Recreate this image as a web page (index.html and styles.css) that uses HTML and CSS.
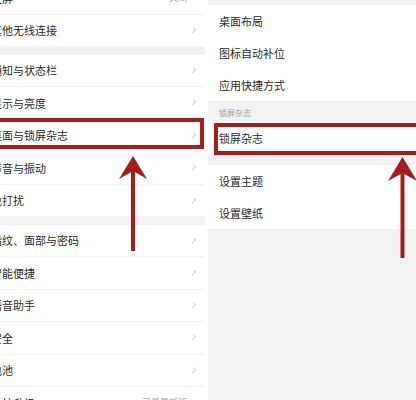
FILE: index.html
```html
<!DOCTYPE html>
<html lang="zh-CN">
<head>
    <meta charset="UTF-8">
    <meta name="viewport" content="width=device-width, initial-scale=1.0">
    <title>设置</title>
    <link rel="stylesheet" href="styles.css">
</head>
<body>
    <div class="screen">
        <div class="panel panel-left">
            <div class="row"><span class="label">投屏</span><span class="value">关闭</span><i class="chev"></i></div>
            <div class="row"><span class="label">其他无线连接</span><i class="chev"></i></div>
            <div class="gap"></div>
            <div class="row"><span class="label">通知与状态栏</span><i class="chev"></i></div>
            <div class="row"><span class="label">显示与亮度</span><i class="chev"></i></div>
            <div class="row marked"><span class="label">桌面与锁屏杂志</span><i class="chev"></i></div>
            <div class="row"><span class="label">声音与振动</span><i class="chev"></i></div>
            <div class="row"><span class="label">免打扰</span><i class="chev"></i></div>
            <div class="gap"></div>
            <div class="row"><span class="label">指纹、面部与密码</span><i class="chev"></i></div>
            <div class="row"><span class="label">智能便捷</span><i class="chev"></i></div>
            <div class="row"><span class="label">语音助手</span><i class="chev"></i></div>
            <div class="row"><span class="label">安全</span><i class="chev"></i></div>
            <div class="row"><span class="label">电池</span><i class="chev"></i></div>
            <div class="row"><span class="label">系统升级</span><span class="value">已是最新版</span><i class="chev"></i></div>
        </div>

        <div class="panel panel-right">
            <div class="strip"></div>
            <div class="row"><span class="label">桌面布局</span></div>
            <div class="row"><span class="label">图标自动补位</span></div>
            <div class="row"><span class="label">应用快捷方式</span></div>
            <div class="section-title">锁屏杂志</div>
            <div class="row tall marked"><span class="label">锁屏杂志</span></div>
            <div class="spacer"></div>
            <div class="row"><span class="label">设置主题</span></div>
            <div class="row"><span class="label">设置壁纸</span></div>
        </div>

        <!-- annotation arrows -->
        <svg class="arrows" width="416" height="400" viewBox="0 0 416 400">
            <rect x="131" y="166" width="4" height="85" fill="#a51c1c"/>
            <path d="M133 156 L147 179 L133 171 L119 179 Z" fill="#a51c1c"/>
            <rect x="400.5" y="167" width="4" height="91" fill="#a51c1c"/>
            <path d="M402.5 157 L417 181 L402.5 173 L388 181 Z" fill="#a51c1c"/>
        </svg>
    </div>
</body>
</html>
```

FILE: styles.css
```css
* {
    margin: 0;
    padding: 0;
    box-sizing: border-box;
    font-family: "Noto Sans CJK SC", "Noto Sans", sans-serif;
}

body {
    background: #fff;
    width: 416px;
    height: 400px;
    overflow: hidden;
}

.screen {
    position: relative;
    width: 416px;
    height: 400px;
    overflow: hidden;
    display: flex;
    align-items: flex-start;
    background: #fff;
}

.panel {
    flex-shrink: 0;
}

.panel-left {
    width: 225px;
    margin-left: -20px;
    margin-top: -18px;
    background: #fff;
}

.panel-right {
    width: 208px;
    height: 400px;
    margin-left: 3px;
    background: #f2f2f3;
}

.row {
    position: relative;
    height: 32.5px;
    display: flex;
    align-items: center;
    padding: 0 8px 0 11px;
    background: #fff;
    border-bottom: 1px solid #f4f4f4;
    color: #2b2b2b;
    font-size: 11px;
}

.panel-right .row {
    height: 32px;
    border-bottom: none;
}

.panel-right .row.tall {
    height: 34px;
}

.label {
    flex: 1;
    white-space: nowrap;
}

.value {
    color: #a8a8a8;
    font-size: 9px;
    margin-right: 4px;
}

.chev {
    width: 4px;
    height: 7px;
    border-right: 1px solid #c4c4c4;
    border-top: 1px solid #c4c4c4;
    transform: rotate(45deg) scale(0.75);
    margin-right: 2px;
}

.gap {
    height: 7.5px;
    background: #f2f2f3;
}

.strip {
    height: 5px;
}

.section-title {
    height: 20px;
    padding: 6px 0 0 11px;
    font-size: 8px;
    color: #a0a0a0;
}

.spacer {
    height: 10px;
}

.marked::after {
    content: "";
    position: absolute;
    border: 4px solid #a51e1e;
}

.panel-left .marked::after {
    left: -10px;
    right: 1px;
    top: -2px;
    bottom: 2px;
}

.panel-right .marked::after {
    left: 6px;
    right: -12px;
    top: 2px;
    bottom: 0;
}

.arrows {
    position: absolute;
    top: 0;
    left: 0;
    pointer-events: none;
}
```
